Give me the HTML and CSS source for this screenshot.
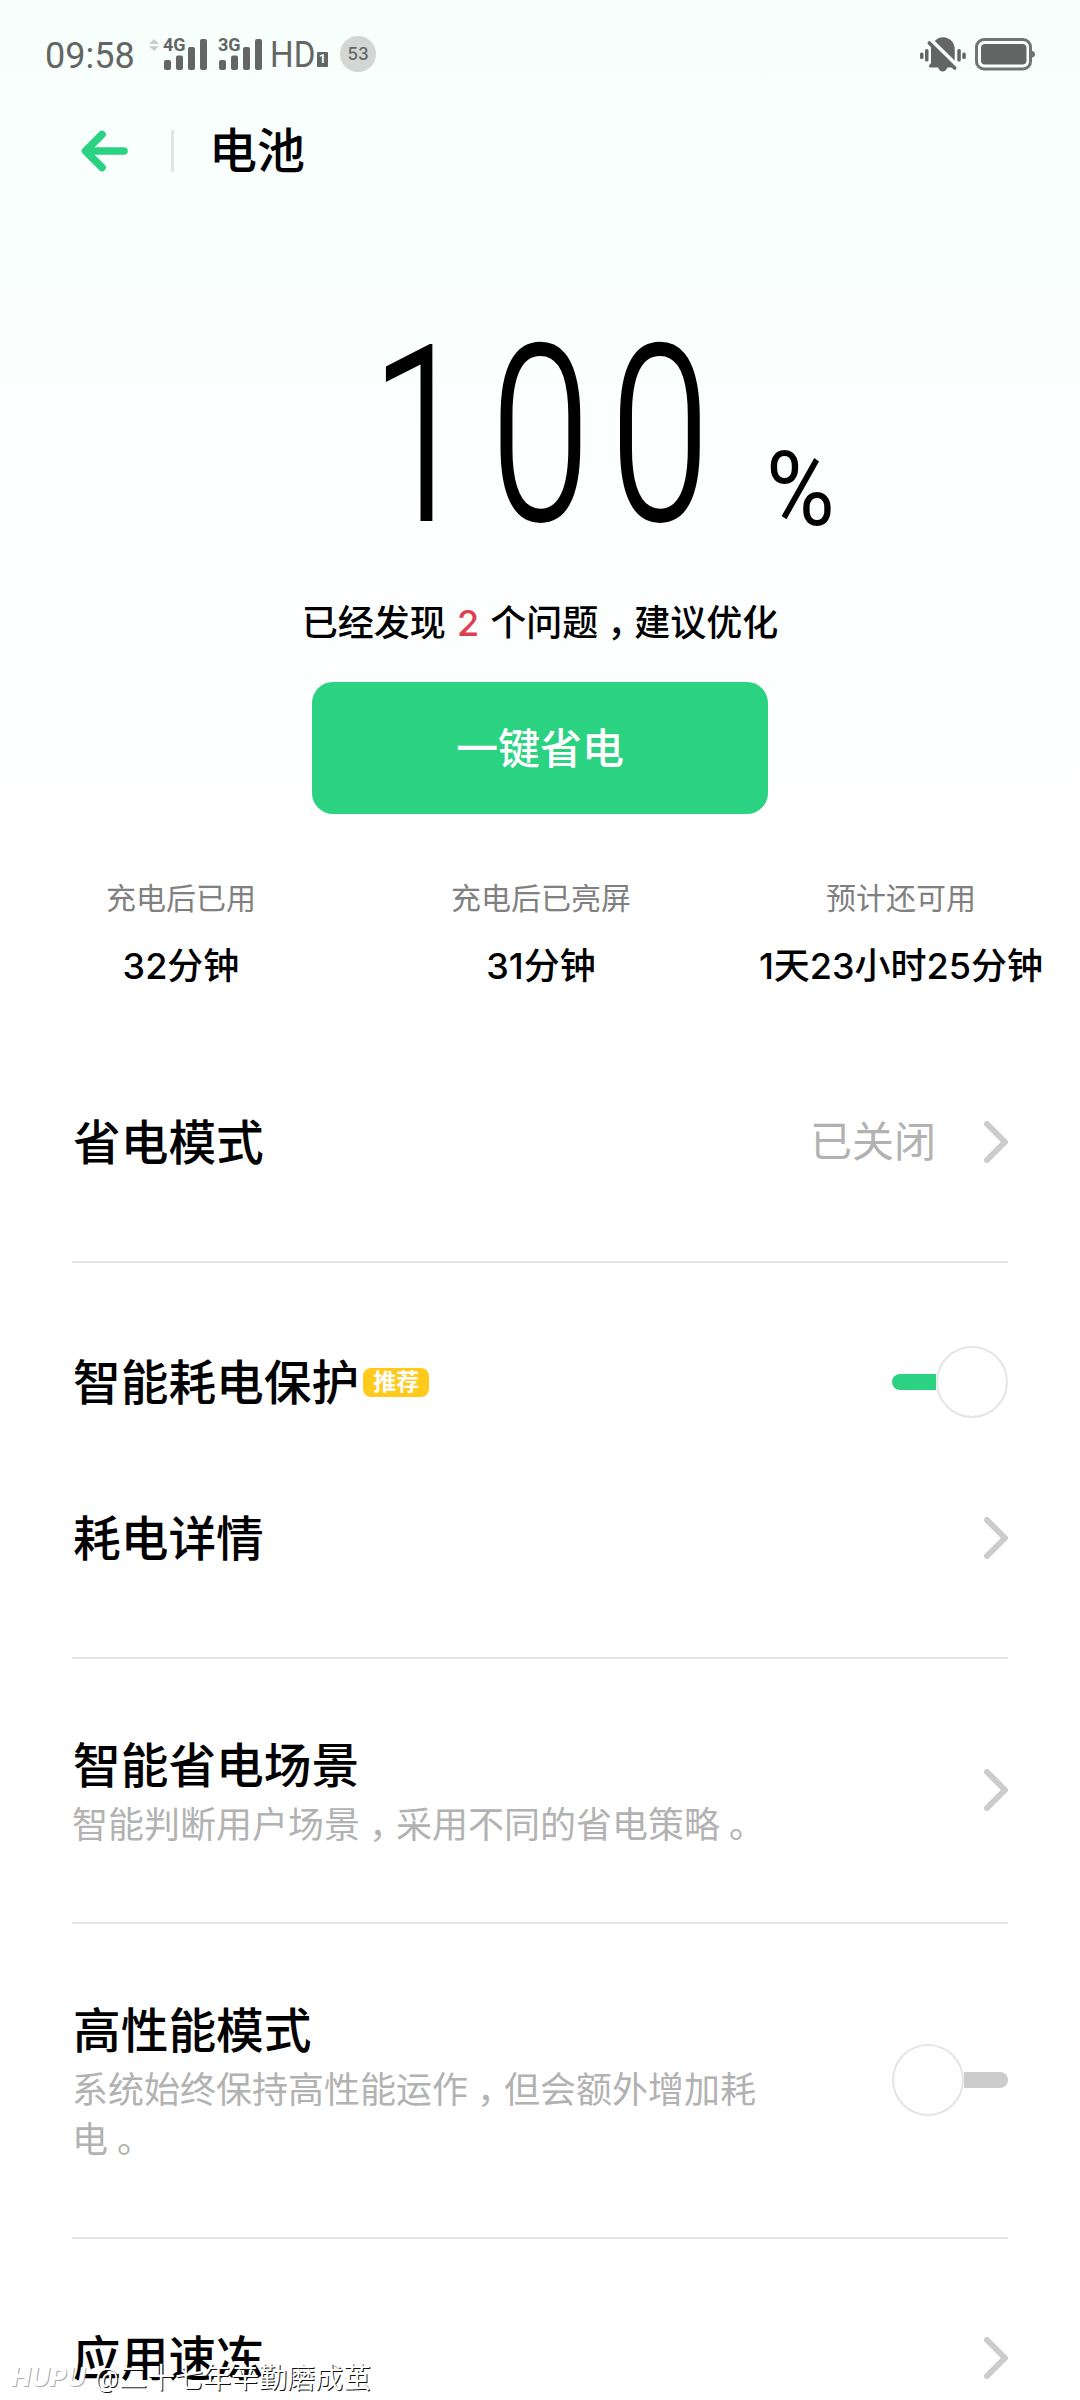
FILE: index.html
```html
<!DOCTYPE html>
<html lang="zh-CN">
<head>
<meta charset="utf-8">
<title>电池</title>
<link rel="stylesheet" href="styles.css">
</head>
<body>
<div class="screen">
  <div class="status">
    <span class="time">09:58</span>
    <svg class="arrows" width="10" height="12" viewBox="0 0 10 12"><path d="M0 5 5 0l5 5zM0 7.2h10L5 12z" fill="#c9cdcb"/></svg>
    <span class="signal"><b>4G</b>
      <svg width="44" height="31" viewBox="0 0 44 31" fill="#646665"><rect y="21" width="7" height="10" rx="2"/><rect x="12" y="16.500" width="7" height="14.500" rx="2"/><rect x="24" y="8" width="7" height="23" rx="2"/><rect x="36" width="7" height="31" rx="2"/></svg>
    </span>
    <span class="signal"><b>3G</b>
      <svg width="44" height="31" viewBox="0 0 44 31" fill="#646665"><rect y="21" width="7" height="10" rx="2"/><rect x="12" y="16.500" width="7" height="14.500" rx="2"/><rect x="24" y="8" width="7" height="23" rx="2"/><rect x="36" width="7" height="31" rx="2"/></svg>
    </span>
    <span class="hd">HD</span>
    <span class="sim">1</span>
    <span class="count">53</span>
    <svg class="bell" width="46" height="36" viewBox="0 0 46 36" fill="#646665">
      <rect x="0" y="15.500" width="3.500" height="6.500" rx="1.500"/><rect x="5" y="12" width="3.500" height="12.500" rx="1.500"/><rect x="37.300" y="12" width="3.500" height="12.500" rx="1.500"/><rect x="42.300" y="15.500" width="3.500" height="6.500" rx="1.500"/>
      <path d="M11 8V26l-1.700 2.300q-1 2 1 2.200H18q1.600 4 4.700 4t4.700-4H34zM14.800 4C17.500 1.300 20 .300 23 .300c6.500 0 11.700 5 11.700 11.500v11.700z"/>
      <path d="M9.300 6 34.700 31" stroke="#646665" stroke-width="3.600" stroke-linecap="round"/>
    </svg>
    <svg class="battery" width="61" height="33" viewBox="0 0 61 33"><rect x="1.500" y="1.500" width="54" height="29.500" rx="7.500" fill="none" stroke="#707372" stroke-width="3"/><rect x="6" y="6" width="45.500" height="20.500" rx="4" fill="#646665"/><path d="M57 13q3 .3 3 3.300t-3 3.300z" fill="#707372"/></svg>
  </div>

  <header class="header">
    <svg class="back" width="48" height="42" viewBox="0 0 48 42" fill="none" stroke="#2bd282" stroke-width="7.600"><path d="M21 4.500 4.500 21 21 37.500" stroke-linecap="round" stroke-linejoin="round"/><path d="M5.500 21h37.500" stroke-linecap="round"/></svg>
    <span class="rule"></span>
    <h1>电池</h1>
  </header>

  <section class="hero">
    <div class="level"><span class="digits">100</span><span class="percent">%</span></div>
    <p class="issues">已经发现 <em>2</em> 个问题<i class="p">，</i>建议优化</p>
    <button class="save">一键省电</button>
    <div class="stats">
      <div><span>充电后已用</span><strong>32分钟</strong></div>
      <div><span>充电后已亮屏</span><strong>31分钟</strong></div>
      <div><span>预计还可用</span><strong>1天23小时25分钟</strong></div>
    </div>
  </section>

  <main class="settings">
    <section class="group">
      <div class="row"><h2>省电模式</h2><span class="state">已关闭</span><svg class="chevron" width="24" height="42" viewBox="0 0 24 42"><path d="M3 3l18 18L3 39"/></svg></div>
    </section>
    <section class="group">
      <div class="row"><h2>智能耗电保护<span class="tag">推荐</span></h2><span class="switch on"><i></i></span></div>
      <div class="row"><h2>耗电详情</h2><svg class="chevron" width="24" height="42" viewBox="0 0 24 42"><path d="M3 3l18 18L3 39"/></svg></div>
    </section>
    <section class="group">
      <div class="row two"><div class="text"><h2>智能省电场景</h2><p>智能判断用户场景<i class="p">，</i>采用不同的省电策略<i class="p">。</i></p></div><svg class="chevron" width="24" height="42" viewBox="0 0 24 42"><path d="M3 3l18 18L3 39"/></svg></div>
    </section>
    <section class="group">
      <div class="row three"><div class="text"><h2>高性能模式</h2><p>系统始终保持高性能运作<i class="p">，</i>但会额外增加耗<br>电<i class="p">。</i></p></div><span class="switch"><i></i></span></div>
    </section>
    <section class="group">
      <div class="row"><h2>应用速冻</h2><svg class="chevron" width="24" height="42" viewBox="0 0 24 42"><path d="M3 3l18 18L3 39"/></svg></div>
    </section>
  </main>
  <div class="watermark"><b>HUPU</b><span class="at">@</span><span>二十七年辛勤磨成茧</span></div>
</div>
</body>
</html>
```
FILE: styles.css
```css
* { box-sizing: border-box; margin: 0; padding: 0; }
body {
  font-family: Inter, "Noto Sans CJK SC", sans-serif;
  color: #000;
  background: #fff;
}
.screen {
  position: relative;
  width: 1080px;
  height: 2400px;
  overflow: hidden;
  background: linear-gradient(#f7fffc, #fff 860px) #fefefe;
}

/* status bar */
.status {
  display: flex;
  align-items: flex-start;
  height: 108px;
  padding-left: 45px;
  color: #646665;
  font-family: Roboto, sans-serif;
}
.time { width: 104px; font-size: 36px; line-height: 42px; margin-top: 35px; }
.arrows { margin: 39px 5px 0 0; }
.signal { position: relative; width: 55px; height: 31px; margin-top: 39px; }
.signal svg { display: block; }
.signal b {
  position: absolute;
  left: -1px;
  top: -3px;
  font-size: 18px;
  line-height: 18px;
}
.hd {
  width: 47px;
  margin: 34px 0 0 -4px;
  font-size: 36px;
  line-height: 42px;
  transform: scaleX(.92);
  transform-origin: left;
}
.sim {
  width: 11px;
  height: 15px;
  margin: 52px 12px 0 0;
  border-radius: 1px;
  background: #646665;
  color: #f7fffc;
  font-size: 12px;
  font-weight: 700;
  line-height: 15px;
  text-align: center;
}
.count {
  width: 36px;
  height: 36px;
  margin-top: 36px;
  border-radius: 50%;
  background: #d2d6d4;
  font: 500 17px/37px Inter, sans-serif;
  text-align: center;
}
.bell { margin: 37px 9px 0 auto; }
.battery { margin: 38px 44px 0 0; }

/* title bar */
.header { display: flex; align-items: center; height: 86px; padding-left: 81px; }
.rule { width: 3px; height: 42px; margin: 0 35px 0 42px; background: #e0e4e3; }
h1, h2 { font-size: 48px; font-weight: 500; line-height: 67px; }
h1 { margin-top: -2px; }

/* charge level */
.hero { height: 870px; }
.level { position: relative; height: 399px; }
.digits {
  position: absolute;
  left: 371px;
  top: 110px;
  font: 300 245px/265px Roboto, sans-serif;
  letter-spacing: 28px;
  -webkit-text-stroke: 2px #000;
  transform: scaleX(.73);
  transform-origin: left;
}
.percent {
  position: absolute;
  left: 766px;
  top: 241px;
  font: 400 103px/110px Roboto, sans-serif;
  transform: scaleX(.91);
  transform-origin: left;
}
.issues { height: 89px; font-size: 36px; font-weight: 500; line-height: 61px; text-align: center; word-spacing: 1.5px; }
.issues em { color: #e03e50; font-style: normal; font-weight: 500; }
.p { display: inline-block; width: 36px; padding-left: 9px; font-style: normal; font-feature-settings: "halt"; text-align: left; white-space: nowrap; }
.save {
  display: block;
  width: 456px;
  height: 132px;
  margin: 0 auto;
  border: 0;
  border-radius: 21px;
  background: #2bd282;
  color: #fff;
  font: 500 42px/133px Inter, "Noto Sans CJK SC", sans-serif;
}
.stats { display: grid; grid-template-columns: repeat(3, 360px); padding: 62px 0 0 1px; text-align: center; }
.stats span { display: block; color: #808080; font-size: 30px; line-height: 44px; }
.stats strong { display: block; margin-top: 20px; font-size: 36px; font-weight: 500; line-height: 52px; white-space: nowrap; }

/* settings list */
.group { margin: 0 72px; padding-bottom: 41px; border-bottom: 2px solid #e5e5e5; }
.group + .group { padding-top: 41px; }
.row { display: flex; align-items: center; justify-content: space-between; height: 156px; }
.row.two { height: 181px; }
.row.three { height: 231px; }
.row h2 { display: flex; align-items: center; padding: 1px 0 0 1px; margin-bottom: -1px; font-size: 47.7px; }
.row p { padding-top: 1px; margin-bottom: -1px; color: #b2b2b2; font-size: 36px; line-height: 50px; }
.state { margin: 0 48px 0 auto; color: #b2b2b2; font-size: 42px; line-height: 60px; }
.chevron { flex: none; margin-bottom: 1px; fill: none; stroke: #ccc; stroke-width: 6; stroke-linecap: round; stroke-linejoin: round; }
.tag {
  width: 66px;
  height: 29px;
  margin: -2px 0 0 4px;
  border-radius: 8px;
  background: #ffca1c;
  color: #fff;
  font-size: 23px;
  font-weight: 700;
  line-height: 28px;
  text-align: center;
}
.switch { display: flex; align-items: center; width: 116px; height: 72px; margin-bottom: 1px; }
.switch::after { content: ""; flex: 1; height: 16px; background: #ccc; border-radius: 0 8px 8px 0; }
.switch i { width: 72px; height: 72px; border: 2px solid #e5e5e5; border-radius: 50%; background: #fefefe; }
.switch.on { flex-direction: row-reverse; }
.switch.on::after { background: #2bd282; border-radius: 8px 0 0 8px; }

/* photo credit laid over the list */
.watermark {
  position: absolute;
  left: 11px;
  top: 2357px;
  display: flex;
  color: #fff;
  font-size: 28px;
  line-height: 42px;
  white-space: nowrap;
  text-shadow: 1px 1px 0 #111;
}
.watermark b { width: 84px; font: italic 800 26px/40px Inter, sans-serif; text-shadow: 1px 1px 0 #aaa; }
.at { width: 24px; font-family: Roboto, sans-serif; font-size: 26px; }
```
